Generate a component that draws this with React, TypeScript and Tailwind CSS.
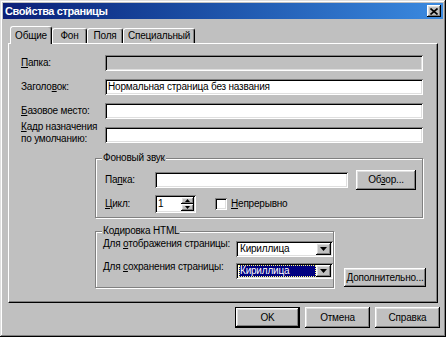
import React from "react";

const raised =
  "shadow-[inset_-1px_-1px_0_#000000,inset_1px_1px_0_#ffffff,inset_-2px_-2px_0_#808080,inset_2px_2px_0_#dfdfdf]";
const sunken =
  "shadow-[inset_1px_1px_0_#808080,inset_-1px_-1px_0_#ffffff,inset_2px_2px_0_#000000,inset_-2px_-2px_0_#dfdfdf]";
const etched =
  "border border-[#808080] shadow-[1px_1px_0_#ffffff,inset_1px_1px_0_#ffffff]";

function Tab({ children, selected, w }: { children: React.ReactNode; selected?: boolean; w: string }) {
  return (
    <div
      className={
        (selected
          ? "relative z-10 h-[18px] -mb-[1px] "
          : "h-[15px] ") +
        w +
        " bg-[#c0c0c0] border-t border-l border-white border-r border-r-black rounded-t-[3px] shadow-[inset_-1px_0_0_#808080] flex items-center justify-center"
      }
    >
      {children}
    </div>
  );
}

function DownArrow() {
  return (
    <svg width="7" height="4" viewBox="0 0 7 4">
      <path d="M0 0H7L3.5 4Z" fill="#000" />
    </svg>
  );
}

function Select({ focused }: { focused?: boolean }) {
  return (
    <div className={"w-[97px] h-[16px] bg-white flex items-stretch p-[2px] " + sunken}>
      <div className="flex-1 flex items-center pl-[1px]">
        {focused ? (
          <span className="flex-1 h-full bg-[#000080] text-white flex items-center pl-[1px] outline-1 outline-dotted outline-[#ffff80] -outline-offset-1">
            Кириллица
          </span>
        ) : (
          <span className="pl-[1px]">Кириллица</span>
        )}
      </div>
      <div className={"w-[15px] bg-[#c0c0c0] flex items-center justify-center " + raised}>
        <DownArrow />
      </div>
    </div>
  );
}

function Btn({ children, className }: { children: React.ReactNode; className: string }) {
  return (
    <div className={"bg-[#c0c0c0] flex items-center justify-center " + raised + " " + className}>
      {children}
    </div>
  );
}

export default function App() {
  return (
    <div className="w-[446px] h-[337px] bg-[#c0c0c0] p-[3px] flex flex-col font-['Liberation_Sans',Arial,sans-serif] text-[10px] tracking-[-0.2px] leading-[12px] text-black shadow-[inset_-1px_-1px_0_#000000,inset_1px_1px_0_#dfdfdf,inset_-2px_-2px_0_#808080,inset_2px_2px_0_#ffffff]">
      {/* Title bar */}
      <div className="h-[16px] shrink-0 flex items-center justify-between bg-linear-to-r from-[#0c1f78] to-[#3b8ae0] pl-[2px] pr-[2px]">
        <span className="text-white font-bold text-[11px] tracking-[-0.4px]">Свойства страницы</span>
        <div className={"w-[14px] h-[12px] bg-[#c0c0c0] flex items-center justify-center " + raised}>
          <svg width="8" height="7" viewBox="0 0 8 7">
            <path d="M0.5 0.5L7.5 6.5M7.5 0.5L0.5 6.5" stroke="#000" strokeWidth="1.6" />
          </svg>
        </div>
      </div>

      {/* Tabs */}
      <div className="mt-[7px] ml-[5px] pl-[2px] h-[17px] flex items-end shrink-0">
        <Tab selected w="w-[42px]">Общие</Tab>
        <Tab w="w-[35px]">Фон</Tab>
        <Tab w="w-[36px]">Поля</Tab>
        <Tab w="w-[72px]">Специальный</Tab>
      </div>

      {/* Panel */}
      <div className="ml-[5px] w-[430px] h-[260px] shrink-0 border-t border-l border-white border-r border-b border-r-black border-b-black shadow-[inset_-1px_-1px_0_#808080] pl-[12px] pr-[14px] pt-[11px] flex flex-col">
        <div className="flex items-center h-[16px]">
          <span className="w-[84px] shrink-0"><u>П</u>апка:</span>
          <div className={"flex-1 h-[16px] bg-[#c0c0c0] " + sunken} />
        </div>
        <div className="flex items-center h-[16px] mt-[8px]">
          <span className="w-[84px] shrink-0">Заголо<u>в</u>ок:</span>
          <div className={"flex-1 h-[16px] bg-white flex items-center pl-[3px] " + sunken}>
            Нормальная страница без названия
          </div>
        </div>
        <div className="flex items-center h-[16px] mt-[8px]">
          <span className="w-[84px] shrink-0"><u>Б</u>азовое место:</span>
          <div className={"flex-1 h-[16px] bg-white " + sunken} />
        </div>
        <div className="flex items-start h-[16px] mt-[8px]">
          <span className="w-[84px] shrink-0 leading-[12px] -mt-[6px]">
            <u>К</u>адр назначения
            <br />
            по умолчанию:
          </span>
          <div className={"flex-1 h-[16px] bg-white " + sunken} />
        </div>

        {/* Group 1 */}
        <div className={"relative mt-[15px] ml-[74px] h-[60px] pt-[11px] pl-[9px] " + etched}>
          <span className="absolute -top-[7px] left-[6px] px-[1px] bg-[#c0c0c0]">Фоновый звук</span>
          <div className="flex items-center h-[20px]">
            <span className="w-[50px] shrink-0">Па<u>п</u>ка:</span>
            <div className={"w-[193px] h-[16px] bg-white " + sunken} />
            <Btn className="ml-[8px] w-[60px] h-[20px]">
              <span>Об<u>з</u>ор...</span>
            </Btn>
          </div>
          <div className="flex items-center h-[18px] mt-[5px]">
            <span className="w-[50px] shrink-0"><u>Ц</u>икл:</span>
            <div className={"w-[41px] h-[18px] bg-white flex items-stretch p-[2px] " + sunken}>
              <span className="flex-1 flex items-center pl-[1px]">1</span>
              <div className="w-[13px] flex flex-col">
                <div className={"flex-1 bg-[#c0c0c0] flex items-center justify-center " + raised}>
                  <svg width="5" height="3" viewBox="0 0 5 3"><path d="M0 3H5L2.5 0Z" fill="#000" /></svg>
                </div>
                <div className={"flex-1 bg-[#c0c0c0] flex items-center justify-center " + raised}>
                  <svg width="5" height="3" viewBox="0 0 5 3"><path d="M0 0H5L2.5 3Z" fill="#000" /></svg>
                </div>
              </div>
            </div>
            <div className={"ml-[19px] w-[12px] h-[12px] bg-white " + sunken} />
            <span className="ml-[4px]"><u>Н</u>епрерывно</span>
          </div>
        </div>

        {/* Group 2 + button */}
        <div className="flex items-end mt-[13px]">
          <div className={"relative ml-[74px] w-[243px] h-[57px] pt-[9px] pl-[7px] " + etched}>
            <span className="absolute -top-[7px] left-[6px] px-[1px] bg-[#c0c0c0]">Кодировка HTML</span>
            <div className="flex items-start">
              <span className="w-[133px] shrink-0 -mt-[3px] whitespace-nowrap">Для <u>о</u>тображения страницы:</span>
              <Select />
            </div>
            <div className="flex items-start mt-[6px]">
              <span className="w-[133px] shrink-0 -mt-[2px] whitespace-nowrap">Для <u>с</u>охранения страницы:</span>
              <Select focused />
            </div>
          </div>
          <Btn className="ml-[10px] w-[82px] h-[19px] mb-[1px] shrink-0">
            <span><u>Д</u>ополнительно...</span>
          </Btn>
        </div>
      </div>

      {/* Bottom buttons */}
      <div className="mt-[4px] pr-[3px] flex justify-end gap-[5px]">
        <div className="w-[65px] h-[21px] border border-black flex">
          <Btn className="flex-1">OK</Btn>
        </div>
        <Btn className="w-[65px] h-[21px]">Отмена</Btn>
        <Btn className="w-[65px] h-[21px]">Справка</Btn>
      </div>
    </div>
  );
}
